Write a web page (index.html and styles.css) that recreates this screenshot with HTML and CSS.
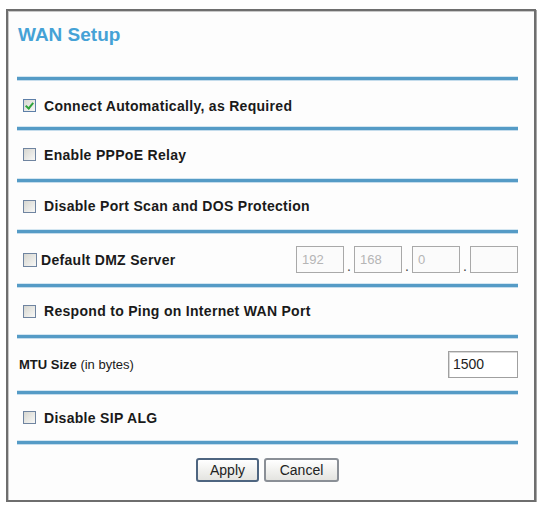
FILE: index.html
```html
<!DOCTYPE html>
<html lang="en">
<head>
    <meta charset="UTF-8">
    <title>WAN Setup</title>
    <link rel="stylesheet" href="styles.css">
</head>
<body>
    <div class="frame">
        <h1 class="title">WAN Setup</h1>
        <div class="rule"></div>

        <div class="row r1">
            <span class="box checked"></span>
            <span class="label">Connect Automatically, as Required</span>
        </div>
        <div class="rule"></div>

        <div class="row r2">
            <span class="box"></span>
            <span class="label">Enable PPPoE Relay</span>
        </div>
        <div class="rule"></div>

        <div class="row r3">
            <span class="box"></span>
            <span class="label">Disable Port Scan and DOS Protection</span>
        </div>
        <div class="rule"></div>

        <div class="row r4">
            <span class="box tight"></span>
            <span class="label">Default DMZ Server</span>
            <div class="ip">
                <span class="ip-field">192</span><span class="dot">.</span>
                <span class="ip-field">168</span><span class="dot">.</span>
                <span class="ip-field">0</span><span class="dot">.</span>
                <span class="ip-field"></span>
            </div>
        </div>
        <div class="rule"></div>

        <div class="row r5">
            <span class="box"></span>
            <span class="label">Respond to Ping on Internet WAN Port</span>
        </div>
        <div class="rule"></div>

        <div class="row r6 plain">
            <span class="label">MTU Size <span class="normal">(in bytes)</span></span>
            <span class="mtu">1500</span>
        </div>
        <div class="rule"></div>

        <div class="row r7">
            <span class="box"></span>
            <span class="label">Disable SIP ALG</span>
        </div>
        <div class="rule"></div>

        <div class="buttons">
            <button class="btn default">Apply</button>
            <button class="btn">Cancel</button>
        </div>
    </div>
</body>
</html>
```

FILE: styles.css
```css
:root {
    --line: #559bc6;
    --title: #45a2d6;
    --text: #1a1a1a;
}

* {
    box-sizing: border-box;
    margin: 0;
    padding: 0;
}

body {
    background: #ffffff;
    font-family: "Liberation Sans", Arial, sans-serif;
    color: var(--text);
}

/* Рамка окна */
.frame {
    margin: 9px 0 0 6px;
    width: 530px;
    height: 493px;
    border: 2px solid #6e6e6e;
    box-shadow: inset 1px 1px 0 #c8c8c8, 1px 1px 0 #a8a8a8;
    background: #fdfdfd;
    padding: 0 16px 0 9px;
}

.title {
    font-size: 19px;
    font-weight: bold;
    color: var(--title);
    padding: 13px 0 0 1px;
    height: 66px;
}

.rule {
    height: 3px;
    background: var(--line);
    box-shadow: 0 1px 0 #c4dcec, 0 -1px 0 #d3e6f1;
}

.row {
    display: flex;
    align-items: center;
    font-size: 14px;
    letter-spacing: 0.3px;
    font-weight: bold;
    padding-left: 6px;
}

.r1 { height: 47px; padding-top: 4px; }
.r2 { height: 49px; }
.r3 { height: 48px; }
.r4 { height: 51px; padding-top: 2px; }
.r5 { height: 48px; }
.r6 { height: 53px; }
.r7 { height: 47px; }

.row.plain {
    padding-left: 2px;
    font-size: 13px;
    letter-spacing: 0;
}

.normal {
    font-weight: normal;
}

/* Чекбоксы */
.box {
    width: 13px;
    height: 13px;
    border: 1px solid #6f84a0;
    background: linear-gradient(135deg, #d6d6d0, #f8f8f6);
    margin-right: 8px;
    position: relative;
}

.box.tight {
    width: 14px;
    height: 14px;
    margin-right: 4px;
}

.box.checked {
    border-color: #5d7fa8;
}

.box.checked::after {
    content: "";
    position: absolute;
    left: 3px;
    top: 1px;
    width: 3px;
    height: 6px;
    border: solid #2fa33a;
    border-width: 0 2px 2px 0;
    transform: rotate(40deg);
}

/* IP адрес */
.ip {
    margin-left: auto;
    display: flex;
    align-items: flex-end;
}

.ip-field {
    width: 48px;
    height: 27px;
    border: 1px solid #a9a9a9;
    background: #fbfbfb;
    color: #b5b5b5;
    font-weight: normal;
    font-size: 13px;
    letter-spacing: 0;
    line-height: 25px;
    padding-left: 5px;
}

.dot {
    width: 10px;
    text-align: center;
    font-weight: normal;
    color: #444;
    line-height: 14px;
}

.mtu {
    margin-left: auto;
    width: 70px;
    height: 27px;
    border: 1px solid #a0a0a0;
    box-shadow: inset 1px 1px 0 #d8d8d8;
    background: #fff;
    font-size: 14px;
    font-weight: normal;
    line-height: 25px;
    padding-left: 4px;
    color: #222;
}

/* Кнопки */
.buttons {
    display: flex;
    justify-content: center;
    gap: 5px;
    padding-top: 14px;
}

.btn {
    height: 24px;
    font-family: "Liberation Sans", Arial, sans-serif;
    font-size: 14px;
    color: #222;
    border: 2px solid #8a8f96;
    border-radius: 3px;
    background: linear-gradient(#ffffff, #e4e4e0);
    padding: 0 6px;
}

.btn.default {
    width: 63px;
    border-color: #4e6580;
}

.btn:not(.default) {
    width: 75px;
}
```
